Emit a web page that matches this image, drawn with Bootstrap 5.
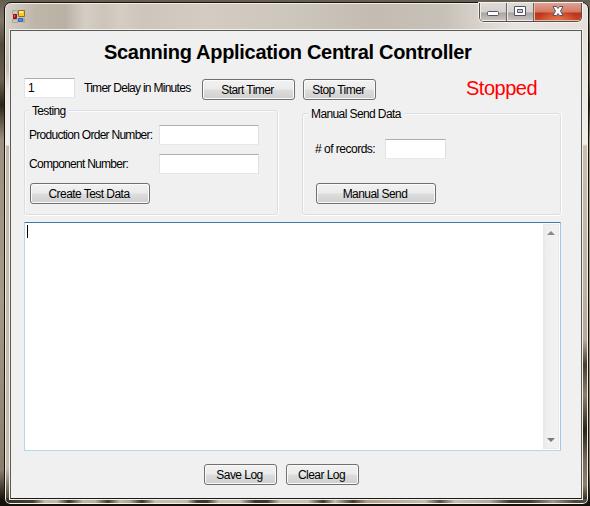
<!DOCTYPE html>
<html lang="en">
<head>
<meta charset="utf-8">
<title>Scanning Application Central Controller</title>
<link href="https://cdn.jsdelivr.net/npm/bootstrap@5.3.0/dist/css/bootstrap.min.css" rel="stylesheet">
<style>
html,body{height:506px;overflow:hidden}
body{font:12px/14px "Liberation Sans",Arial,sans-serif;letter-spacing:-.72px;color:#000;padding:2px 1px 1px 4px;
 background:linear-gradient(180deg,#655d4d 0,#817769 20px,#51493a 45px,#6b604c 80px,#2c2518 105px,#9c917f 140px,#a59a88 300px,#8a7f6d 470px,#15110a 500px)}
.window{height:503px;border:1px solid #151310;border-radius:7px 7px 6px 6px;box-shadow:inset 0 0 0 1px #f3f0eb;padding:1px;
 background:
 linear-gradient(90deg,#363026 0,#463e32 28px,#c6bcad 40px,#c2b8a9 52px,#3a3125 64px,#c0b6a6 78px,#bdb29d 90px,#423929 103px,#c4b9a8 115px,#b0a592 125px,#3d3429 137px,#cabfb0 150px,#c5bbac 182px,#463b30 192px,#3d3329 202px,#cabfb1 214px,#cabfb1 235px,#40352b 250px,#41362c 262px,#cabfb1 275px,#cabfb1 303px,#40362c 318px,#c8bdac 330px,#453b2e 348px,#ae9f85 362px,#c8bdb1 420px,#594b42 435px,#c9beb4 450px,#b6aaa0 485px,#423730 505px,#44382f 525px,#a2968c 548px,#4d443a 570px,#5c5145 585px) 0 100%/100% 6px no-repeat,
 linear-gradient(90deg,#d5cfc5 0,#beb6a9 30px,#b9b1a4 60px,#d5cec5 80px,#cdc5ba 98px,#d5ccc2 115px,#cec6bd 138px,#d4ccc3 200px,#cdc6bc 290px,#c4bcb2 370px,#c8c1b9 440px,#e8e4df 510px,#e5e0da 585px) 0 0/100% 28px no-repeat,
 linear-gradient(180deg,#d8d2c8 0,#c8c0b5 65px,#eeebe6 90px,#f4f1ec 142px,#c4baab 143px,#c6bcad 465px,#463e32 498px)}
.frame-right{background:linear-gradient(180deg,#e5e0da 0,#f2efea 114px,#c8bfb1 116px,#beb4a4 250px,#b5aa99 310px,#443d30 335px,#8c806b 365px,#292419 400px,#756b57 430px,#8c806b 455px,#383124 469px);width:4px;margin-left:1px}
.titlebar{height:26px}
.app-icon{margin:5px 0 0 6px}
.client{width:572px;height:469px;margin-left:4px;border:1px solid #5c5a57;border-bottom-color:#1c1a17;outline:1px solid #f3f0ec;background:#f0f0f0}
.caption{height:19px;width:103px;margin:-1px 5px 0 0;border:1px solid #55504c;border-top:0;border-radius:0 0 5px 5px;overflow:hidden;box-shadow:0 0 0 1px #f5f2ee}
.cap{width:27px;background:linear-gradient(#dfdbd8 0,#d4cfcc 9px,#aaa5a2 10px,#cbc5c1 18px);border-right:1px solid #6d6662;box-shadow:inset 1px -1px 0 #eeeae7}
.cap-close{background:radial-gradient(ellipse at 50% 120%,#e88359 0,transparent 60%),linear-gradient(#dfa294 0,#d57763 9px,#ba3219 10px,#c84c2b 18px);box-shadow:inset 1px -1px 0 #eeb6a5}
.headline{font:700 20px/24px "Liberation Sans",Arial,sans-serif;letter-spacing:-.3px;padding:9px 0 0 93px;height:47px}
.field{display:block;height:20px;padding:0 3px;border:1px solid #e3e9ef;border-top-color:#abadb3;border-left-color:#e2e3ea;border-right-color:#dbdfe6;border-radius:1px;background:#fff;font:inherit;letter-spacing:inherit;line-height:18px;color:#000}
.wbtn{height:21px;padding:1px 2px 0 0;border:1px solid #707070;border-radius:3px;font:inherit;letter-spacing:-.55px;line-height:18px;color:#000;text-align:center;
 background:linear-gradient(#f2f2f2 0,#ebebeb 9px,#dddddd 10px,#cfcfcf 100%);box-shadow:inset 0 0 0 1px #fafafa;white-space:nowrap}
.timer-row{height:32px;padding-left:13px}
.timer-label{width:118px;margin:3px 0 0 9px}
.timer-row .wbtn{margin:1px 8px 0 0}
.status{font:20px/24px "Liberation Sans",Arial,sans-serif;letter-spacing:-.5px;color:#f00;margin:-2px 0 0 82px}
.groups{height:105px;padding:0 20px 0 13px}
.group{border:1px solid #d5dfe8;border-radius:3px;box-shadow:inset 1px 1px 0 #fbfbfb,0 1px 0 #fff,1px 0 0 #fff;white-space:nowrap}
.testing{width:254px;height:105px;padding:0 18px 0 4px}
.manual{width:259px;height:102px;padding:0 114px 0 12px}
.legend{background:#f0f0f0;width:max-content;padding:0 4px 0 3px;height:14px;margin-top:-7px}
.testing .entry{padding-bottom:9px}
.testing .legend{margin-bottom:7px;letter-spacing:-.65px}
.manual .legend{margin-left:-7px;letter-spacing:-.6px}
.manual .entry{padding:18px 0 24px}
.group .wbtn{margin-left:1px}
.manual .entry span{letter-spacing:-.5px}
.log{width:537px;height:229px;margin:7px 0 0 13px;border:1px solid #b4d6ef;border-top-color:#3d7bad;border-right-color:#9dc9e8;background:#fff;border-radius:1px}
.caret{width:1px;height:13px;background:#000;margin:2px 0 0 2px}
.scroll{width:16px;margin:1px;padding:5px 0 5px;border:1px solid #e9e9e9;background:linear-gradient(90deg,#e9e9e9,#efefef 3px,#f2f2f2)}
.actions{padding:13px 0 0 193px;gap:9px}
.w50{width:51px}.w93{width:93px}.w73{width:73px}.w100{width:100px}.w61{width:61px}.w120{width:120px}
</style>
</head>
<body>
<div class="window">
 <div class="titlebar d-flex justify-content-between">
  <svg class="app-icon" width="14" height="15" viewBox="0 0 14 15"><path fill="#c9c7c3" stroke="#aaa59e" d="M.5 1.500h5v4h-5zM.5 10.500h5v3h-5zM11.500 9.500h1v4h-1z"/><path fill="#b61010" stroke="#8e1510" d="M1.500 5.500h3v4h-3z"/><path fill="#ed6e60" d="M2 6h1v2h-1z"/><path fill="#ffc928" stroke="#94701a" d="M6.500 1.500h6v6h-6z"/><path fill="#ffed91" d="M7 2h4v2h-4z"/><path fill="#4d91ed" stroke="#3161b2" d="M6.500 9.500h4v3h-4z"/></svg>
  <div class="caption d-flex">
   <div class="cap flex-shrink-0 d-flex justify-content-center"><svg width="14" height="18"><rect x="1.500" y="8.500" width="11" height="4" rx="1" fill="#fff" stroke="#505365"/></svg></div>
   <div class="cap flex-shrink-0 d-flex justify-content-center"><svg width="14" height="18"><path fill="#fff" fill-rule="evenodd" stroke="#505365" d="M1.500 3.500h11v9h-11zM4.500 6.500h5v3h-5z"/></svg></div>
   <div class="cap-close flex-fill d-flex justify-content-center"><svg width="14" height="18"><path fill="#fff" stroke="#55566a" d="M2 3.500h3.500L7 5.500l1.500-2H12L9.500 8l2.500 4.500H8.500L7 10.500l-1.500 2H2L4.500 8z"/></svg></div>
  </div>
 </div>
 <div class="d-flex">
  <main class="client">
   <div class="headline text-nowrap">Scanning Application Central Controller</div>
   <div class="timer-row d-flex align-items-start">
    <input class="field w50" value="1" aria-label="Delay">
    <span class="timer-label text-nowrap">Timer Delay in Minutes</span>
    <button class="wbtn w93">Start Timer</button>
    <button class="wbtn w73">Stop Timer</button>
    <span class="status">Stopped</span>
   </div>
   <div class="groups d-flex justify-content-between align-items-end">
    <section class="group testing">
     <div class="legend">Testing</div>
     <div class="entry d-flex justify-content-between align-items-center"><span>Production Order Number:</span><input class="field w100" aria-label="Production Order Number"></div>
     <div class="entry d-flex justify-content-between align-items-center"><span>Component Number:</span><input class="field w100" aria-label="Component Number"></div>
     <button class="wbtn w120 d-block">Create Test Data</button>
    </section>
    <section class="group manual">
     <div class="legend">Manual Send Data</div>
     <div class="entry d-flex justify-content-between align-items-center"><span># of records:</span><input class="field w61" aria-label="Number of records"></div>
     <button class="wbtn w120 d-block">Manual Send</button>
    </section>
   </div>
   <div class="log d-flex justify-content-between">
    <div class="caret"></div>
    <div class="scroll d-flex flex-column justify-content-between align-items-center">
     <svg width="8" height="5"><path fill="#8a8a8a" d="M0 5h8L4 1z"/></svg>
     <svg width="8" height="5"><path fill="#7a7a7a" d="M0 0h8L4 4z"/></svg>
    </div>
   </div>
   <div class="actions d-flex">
    <button class="wbtn w73">Save Log</button>
    <button class="wbtn w73">Clear Log</button>
   </div>
  </main>
  <div class="frame-right"></div>
 </div>
</div>
<script src="https://cdn.jsdelivr.net/npm/bootstrap@5.3.0/dist/js/bootstrap.bundle.min.js"></script>
</body>
</html>
